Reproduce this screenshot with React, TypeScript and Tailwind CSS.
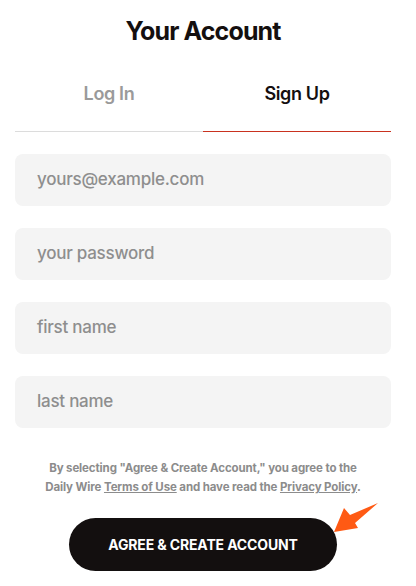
import React from "react";

const fields = ["yours@example.com", "your password", "first name", "last name"];

export default function App() {
  return (
    <div className="w-[416px] h-[586px] bg-white relative overflow-hidden" style={{ fontFamily: "Inter, 'Liberation Sans', sans-serif" }}>
      <div className="ml-[15px] w-[376px] pt-[15px]">
        <h1 className="text-center text-[25px] leading-[32px] font-bold tracking-[-0.035em] text-[#140f0f]">Your Account</h1>
        <div className="mt-[15px] flex">
          <div className="flex-1 pt-[20px] pb-[25px] text-center border-b border-[#dcdcdc]">
            <span className="text-[18px] leading-[22px] font-semibold tracking-[-0.02em] text-[#9a9a9a]">Log In</span>
          </div>
          <div className="flex-1 pt-[20px] pb-[25px] text-center border-b border-[#c9321f]">
            <span className="text-[18px] leading-[22px] font-semibold tracking-[-0.02em] text-[#140f0f]">Sign Up</span>
          </div>
        </div>
        <div className="mt-[22px] flex flex-col gap-[22px]">
          {fields.map((f) => (
            <div key={f} className="h-[52px] rounded-[8px] bg-[#f4f4f4] flex items-center pl-[22px]">
              <span className="text-[17px] font-medium tracking-[-0.015em] text-[#8e8e8e]">{f}</span>
            </div>
          ))}
        </div>
        <p className="mt-[31px] text-center text-[11.5px] leading-[19px] font-bold tracking-[-0.01em] text-[#8c8c8c]">
          By selecting "Agree &amp; Create Account," you agree to the
          <br />
          Daily Wire <span className="underline">Terms of Use</span> and have read the{" "}
          <span className="underline">Privacy Policy</span>.
        </p>
        <div className="mt-[21px] flex justify-center">
          <button className="w-[268px] h-[53px] rounded-full bg-[#130f0f] text-white text-[14px] font-bold tracking-[-0.01em]">
            AGREE &amp; CREATE ACCOUNT
          </button>
        </div>
      </div>
      <svg className="absolute left-[330px] top-[500px]" width="50" height="36" viewBox="330 500 50 36">
        <polygon points="334,532 344,508 350,515 378,503 355,523 358,528" fill="#ff5a14" />
      </svg>
    </div>
  );
}
